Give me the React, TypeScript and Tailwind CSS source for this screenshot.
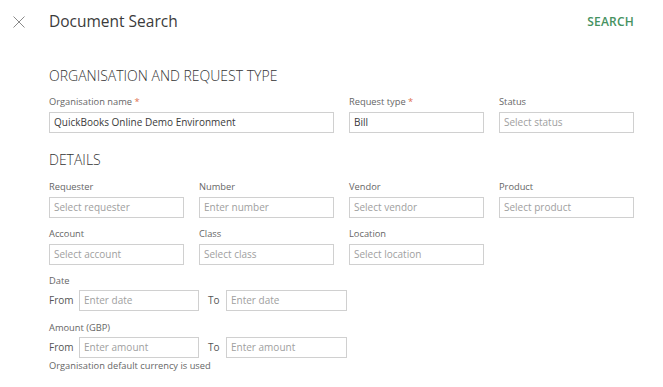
const font = { fontFamily: '"Open Sans", "Liberation Sans", sans-serif' };

function Label({ text, required }: { text: string; required?: boolean }) {
  return (
    <div className="h-[14px] text-[9.3px] leading-[14px] text-[#666] mb-[3px]">
      {text}
      {required && <span className="text-[#e0704f]"> *</span>}
    </div>
  );
}

function Field({ value, placeholder }: { value?: string; placeholder?: string }) {
  return (
    <div className="h-[21px] border border-[#d0d0d0] bg-white px-[4px] flex items-center text-[10px]">
      {value ? (
        <span className="text-[#3a3a3a]">{value}</span>
      ) : (
        <span className="text-[#a0a0a0]">{placeholder}</span>
      )}
    </div>
  );
}

function Range({ placeholder }: { placeholder: string }) {
  return (
    <div className="flex items-center text-[10px] text-[#555]">
      <span className="w-[30px]">From</span>
      <div className="w-[120px]">
        <Field placeholder={placeholder} />
      </div>
      <span className="w-[27px] pl-[9px]">To</span>
      <div className="w-[121px]">
        <Field placeholder={placeholder} />
      </div>
    </div>
  );
}

export default function App() {
  return (
    <div className="w-[663px] h-[387px] bg-white overflow-hidden" style={font}>
      <div className="h-[43px] flex items-center pl-[13px] pr-[29px]">
        <svg width="12" height="12" viewBox="0 0 12 12" className="shrink-0">
          <path d="M0.5 0.5 L11.5 11.5 M11.5 0.5 L0.5 11.5" stroke="#8a8a8a" strokeWidth="1" />
        </svg>
        <span className="ml-[24px] text-[15.5px] font-medium text-[#3b3b3b]">Document Search</span>
        <span className="ml-auto text-[12px] font-semibold text-[#46925f] tracking-[0.2px]">SEARCH</span>
      </div>

      <div className="pl-[49px] pr-[29px]">
        <div className="mt-[23px] h-[20px] leading-[20px] text-[14px] font-light text-[#333]">
          ORGANISATION AND REQUEST TYPE
        </div>
        <div className="mt-[9px] grid grid-cols-[135px_135px_135px_135px] gap-x-[15px]">
          <div className="col-span-2">
            <Label text="Organisation name" required />
            <Field value="QuickBooks Online Demo Environment" />
          </div>
          <div>
            <Label text="Request type" required />
            <Field value="Bill" />
          </div>
          <div>
            <Label text="Status" />
            <Field placeholder="Select status" />
          </div>
        </div>

        <div className="mt-[17px] h-[20px] leading-[20px] text-[14px] font-light text-[#333]">DETAILS</div>
        <div className="mt-[10px] grid grid-cols-[135px_135px_135px_135px] gap-x-[15px] gap-y-[9px]">
          <div>
            <Label text="Requester" />
            <Field placeholder="Select requester" />
          </div>
          <div>
            <Label text="Number" />
            <Field placeholder="Enter number" />
          </div>
          <div>
            <Label text="Vendor" />
            <Field placeholder="Select vendor" />
          </div>
          <div>
            <Label text="Product" />
            <Field placeholder="Select product" />
          </div>
          <div>
            <Label text="Account" />
            <Field placeholder="Select account" />
          </div>
          <div>
            <Label text="Class" />
            <Field placeholder="Select class" />
          </div>
          <div>
            <Label text="Location" />
            <Field placeholder="Select location" />
          </div>
        </div>

        <div className="mt-[9px]">
          <div className="h-[14px] text-[9.3px] leading-[14px] text-[#666] mb-[2px]">Date</div>
          <Range placeholder="Enter date" />
        </div>
        <div className="mt-[10px]">
          <div className="h-[14px] text-[9.3px] leading-[14px] text-[#666] mb-[2px]">Amount (GBP)</div>
          <Range placeholder="Enter amount" />
          <div className="mt-[1px] h-[14px] text-[9.3px] leading-[14px] text-[#666]">
            Organisation default currency is used
          </div>
        </div>
      </div>
    </div>
  );
}
